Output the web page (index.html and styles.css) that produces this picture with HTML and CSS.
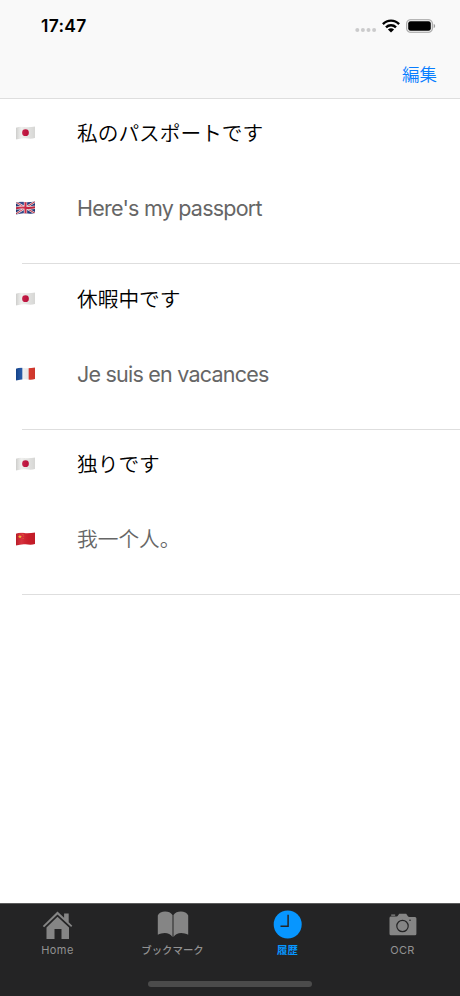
FILE: index.html
```
<!DOCTYPE html>
<html lang="ja">
<head>
<meta charset="utf-8">
<title>履歴</title>
<link rel="stylesheet" href="styles.css">
</head>
<body>
<svg class="defs" aria-hidden="true">
  <defs>
    <clipPath id="wave"><path d="M0 1.500C3.500.2 6 .8 9 1S15 .9 18 0V11.200C15 12.200 12 11.800 9 11.500S3 11.700 0 12.800Z"/></clipPath>
    <linearGradient id="shade"><stop offset="0" stop-color="#000" stop-opacity=".14"/><stop offset=".3" stop-color="#fff" stop-opacity=".08"/><stop offset=".65" stop-color="#000" stop-opacity=".05"/><stop offset="1" stop-color="#000" stop-opacity=".1"/></linearGradient>
    <symbol id="jp" viewBox="0 0 18 13"><g clip-path="url(#wave)"><path fill="#eeeeec" d="M0 0h18v13H0z"/><circle cx="9" cy="6.200" r="3.200" fill="#c4123e"/><path fill="url(#shade)" d="M0 0h18v13H0z"/></g></symbol>
    <symbol id="gb" viewBox="0 0 18 13"><g clip-path="url(#wave)"><path fill="#253a80" d="M0 0h18v13H0z"/><path d="M0 1 18 11.500M0 12 18 .5" stroke="#eee" stroke-width="2.200"/><path d="M0 1 18 11.500M0 12 18 .5" stroke="#d02543" stroke-width=".9"/><path d="M9 0v13M0 6.700Q5 5.700 9 6.300T18 5.700" fill="none" stroke="#eee" stroke-width="3.200"/><path d="M9 0v13M0 6.700Q5 5.700 9 6.300T18 5.700" fill="none" stroke="#d02543" stroke-width="1.900"/><path fill="url(#shade)" d="M0 0h18v13H0z"/></g></symbol>
    <symbol id="fr" viewBox="0 0 18 13"><g clip-path="url(#wave)"><path fill="#f3f3f3" d="M0 0h18v13H0z"/><path fill="#154b9d" d="M0 0h6v13H0z"/><path fill="#e33d31" d="M12 0h6v13h-6z"/><path fill="url(#shade)" d="M0 0h18v13H0z"/></g></symbol>
    <symbol id="cn" viewBox="0 0 18 13"><g clip-path="url(#wave)"><path fill="#d41f2c" d="M0 0h18v13H0z"/><path fill="#f7b52b" d="m3.700 2.300.5 1.300h1.400l-1.100.9.4 1.400-1.200-.8-1.200.8.4-1.400-1.100-.9h1.400z"/><circle cx="6.600" cy="2.300" r=".45" fill="#f0902b"/><circle cx="7.400" cy="3.700" r=".4" fill="#f0902b"/><circle cx="6.700" cy="6" r=".4" fill="#f0902b"/><path fill="url(#shade)" d="M0 0h18v13H0z"/></g></symbol>
  </defs>
</svg>
<div class="app">
  <header class="header">
    <div class="status">
      <span class="time">17:47</span>
      <div class="indicators">
        <svg class="signal" width="22" height="6" viewBox="0 0 22 6" fill="#cbcbcc"><circle cx="2.300" cy="3" r="2"/><circle cx="7.900" cy="3" r="2"/><circle cx="13.500" cy="3" r="2"/><circle cx="19.100" cy="3" r="2"/></svg>
        <svg class="wifi" width="18" height="14" viewBox="0 0 18 14"><g fill="none" stroke="#000" stroke-width="2.400"><path d="M.9 5.100C5.400.4 12.600.4 17.100 5.100"/><path d="M4 8.300c2.800-2.800 7.200-2.800 10 0"/></g><path d="M9 13.400 5.900 10.400c1.800-1.500 4.400-1.500 6.200 0z"/></svg>
        <svg class="battery" width="30" height="14" viewBox="0 0 30 14"><rect x=".7" y=".7" width="25.600" height="12.600" rx="3.700" fill="none" stroke="#a0a0a0" stroke-width="1.100"/><rect x="2.200" y="2.200" width="22.600" height="9.600" rx="2.300"/><path fill="#999" d="M27.700 4.800c2 .8 2 3.600 0 4.400z"/></svg>
      </div>
    </div>
    <div class="nav"><a class="edit">編集</a></div>
  </header>
  <main class="list">
    <article class="entry">
      <div class="line"><svg class="flag"><use href="#jp"/></svg><p class="source">私のパスポートです</p></div>
      <div class="line"><svg class="flag"><use href="#gb"/></svg><p class="target">Here's my passport</p></div>
    </article>
    <article class="entry">
      <div class="line"><svg class="flag"><use href="#jp"/></svg><p class="source">休暇中です</p></div>
      <div class="line"><svg class="flag"><use href="#fr"/></svg><p class="target">Je suis en vacances</p></div>
    </article>
    <article class="entry">
      <div class="line"><svg class="flag"><use href="#jp"/></svg><p class="source">独りです</p></div>
      <div class="line"><svg class="flag"><use href="#cn"/></svg><p class="target chinese" lang="zh">我一个人。</p></div>
    </article>
  </main>
  <footer class="tabbar">
    <nav class="tabs">
      <a class="tab"><svg width="32" height="32" viewBox="0 0 32 32" fill="#858585"><path d="M15.500 7.800 27 18.500V30h-7.500V20h-7v10H4.500V18.500z"/><path d="M.8 17 15.500 2.500l6.600 6.300V4.500h4.600v8.700l3.600 3.600-1.200 1.200L15.500 5.600 2.100 18.200z"/></svg><span class="latin">Home</span></a>
      <a class="tab"><svg width="32" height="32" viewBox="0 0 32 32" fill="#858585"><path d="M.8 6.500C2.500 1.500 12.600 1 15.500 6v22c-2.900-5-9.700-5-14.700-2.200z"/><path d="M16.500 6c2.900-5 13-4.500 14.700.5v19.300c-5-2.800-11.800-2.800-14.700 2.200z"/></svg><span>ブックマーク</span></a>
      <a class="tab active"><svg width="32" height="32" viewBox="0 0 32 32"><circle cx="15.700" cy="15.500" r="14" fill="#0796ff"/><path d="M16.100 5.700v11.500H8.500" fill="none" stroke="#242425" stroke-width="1.500"/></svg><span>履歴</span></a>
      <a class="tab"><svg width="32" height="32" viewBox="0 0 32 32"><path fill="#858585" d="M4.200 5.500h4v1.200H4.200zM4 7.600h5.500q1 0 1.500-1l1.200-1.800h7l1.200 1.800q.5 1.400 1.700 1.400H28q1.400 0 1.400 1.500v15.300q0 1.500-1.400 1.500H3.900q-1.400 0-1.400-1.500V9q0-1.400 1.500-1.400z"/><circle cx="15.500" cy="17" r="5.700" fill="none" stroke="#242425" stroke-width="1.200"/><circle cx="23" cy="11.200" r=".8" fill="#242425"/></svg><span class="latin">OCR</span></a>
    </nav>
    <div class="home-indicator"></div>
  </footer>
</div>
</body>
</html>
```
FILE: styles.css
```
* { box-sizing: border-box; }
body { margin: 0; background: #fff; font-family: Inter, "Noto Sans CJK JP", sans-serif; }
p { margin: 0; }
.defs { position: absolute; width: 0; height: 0; }
.app { width: 460px; height: 996px; display: flex; flex-direction: column; }
.header { height: 99px; background: #f9f9f9; border-bottom: 1px solid #dedede; }
.status { height: 51px; padding: 0 24px 0 41px; display: flex; align-items: center; justify-content: space-between; }
.time { font-size: 17.500px; font-weight: 600; line-height: 20px; letter-spacing: .25px; }
.indicators { display: flex; align-items: center; }
.signal { margin-top: 8px; margin-right: 5px; }
.wifi { margin-right: 6px; }
.nav { height: 47px; padding-right: 23px; display: flex; align-items: center; justify-content: flex-end; }
.edit { color: #087dff; font-size: 17.500px; line-height: 24px; font-weight: 350; }
.list { flex: 1; }
.entry { height: 165.500px; padding: 15px 0 0 16px; display: flex; flex-direction: column; gap: 35px; background: linear-gradient(#dedede, #dedede) 22px calc(100% - .4px) / 100% 1px no-repeat; }
.line { height: 40px; display: flex; align-items: center; }
.flag { width: 19px; height: 14px; margin-right: 42px; margin-bottom: 2px; }
.source { font-size: 20.700px; line-height: 30px; font-weight: 350; white-space: nowrap; }
.target { margin-top: -2px; color: #666; font-size: 21.500px; letter-spacing: -.77px; line-height: 30px; white-space: nowrap; }
.chinese { margin-top: -4px; font-family: "Noto Sans CJK SC", sans-serif; font-size: 20.700px; letter-spacing: 0; font-weight: 350; }
.tabbar { height: 93px; background: #242425; border-top: 1px solid #5b5b5b; display: flex; flex-direction: column; align-items: center; }
.tabs { width: 100%; height: 77px; display: grid; grid-template-columns: repeat(4, 1fr); }
.tab { padding-top: 5px; display: flex; flex-direction: column; align-items: center; color: #929292; font-size: 10.400px; font-weight: 500; line-height: 16px; }
.tab svg { display: block; }
.tab span { margin-top: 2px; }
.tab .latin { margin-top: 1px; font-size: 11px; font-weight: 400; letter-spacing: .4px; }
.active { color: #0796ff; font-weight: 700; }
.home-indicator { width: 164px; height: 6px; border-radius: 3px; background: #4b4b4b; }
```
